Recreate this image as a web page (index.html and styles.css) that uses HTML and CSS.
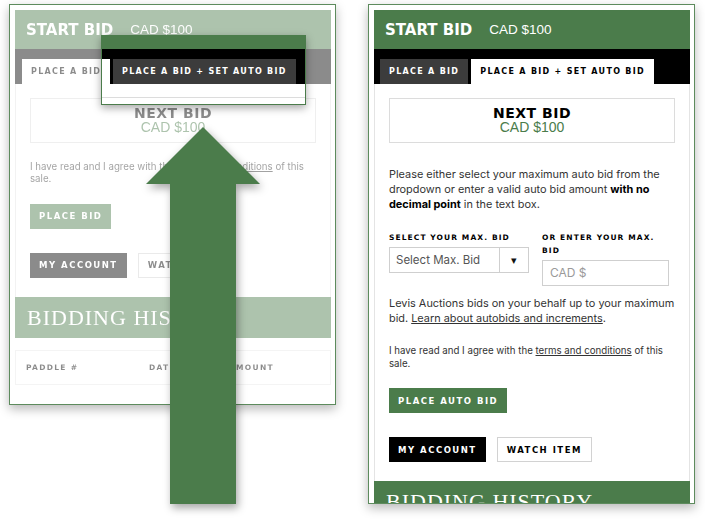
FILE: index.html
```html
<!DOCTYPE html>
<html lang="en">
<head>
    <meta charset="UTF-8">
    <meta name="viewport" content="width=device-width, initial-scale=1.0">
    <title>Start Bid - Auto Bid</title>
    <link rel="stylesheet" href="styles.css">
</head>
<body>
    <div class="stage">
        <!-- before: old bid box, faded -->
        <div class="panel panel-old">
            <div class="card faded">
                <div class="bid-head">
                    <span class="bid-title">START BID</span>
                    <span class="bid-price">CAD $100</span>
                </div>
                <div class="tabs tabs-old">
                    <div class="tab tab-on">PLACE A BID</div>
                    <div class="tab">PLACE A BID + SET AUTO BID</div>
                </div>
                <div class="card-body">
                    <div class="next-bid">
                        <div class="next-label">NEXT BID</div>
                        <div class="next-price">CAD $100</div>
                    </div>
                    <p class="terms terms-old">I have read and I agree with the <u>terms and conditions</u> of this sale.</p>
                    <button class="btn btn-green">PLACE BID</button>
                    <div class="btn-row">
                        <button class="btn btn-dark">MY ACCOUNT</button>
                        <button class="btn btn-line">WATCH ITEM</button>
                    </div>
                </div>
                <div class="history">BIDDING HISTORY</div>
                <div class="history-table">
                    <span class="col-paddle">PADDLE #</span>
                    <span class="col-date">DATE</span>
                    <span>AMOUNT</span>
                </div>
            </div>
        </div>

        <!-- after: auto bid tab open -->
        <div class="panel panel-new">
            <div class="card">
                <div class="bid-head">
                    <span class="bid-title">START BID</span>
                    <span class="bid-price">CAD $100</span>
                </div>
                <div class="tabs">
                    <div class="tab">PLACE A BID</div>
                    <div class="tab tab-on">PLACE A BID + SET AUTO BID</div>
                </div>
                <div class="card-body">
                    <div class="next-bid">
                        <div class="next-label">NEXT BID</div>
                        <div class="next-price">CAD $100</div>
                    </div>
                    <p class="note">Please either select your maximum auto bid from the dropdown or enter a valid auto bid amount <b>with no decimal point</b> in the text box.</p>
                    <div class="fields">
                        <div class="field field-select">
                            <div class="label">SELECT YOUR MAX. BID</div>
                            <div class="select">
                                <span class="select-text">Select Max. Bid</span>
                                <span class="select-caret">&#9662;</span>
                            </div>
                        </div>
                        <div class="field field-input">
                            <div class="label">OR ENTER YOUR MAX. BID</div>
                            <div class="input">CAD $</div>
                        </div>
                    </div>
                    <p class="note note-auto">Levis Auctions bids on your behalf up to your maximum bid. <u>Learn about autobids and increments</u>.</p>
                    <p class="terms terms-new">I have read and I agree with the <u>terms and conditions</u> of this sale.</p>
                    <button class="btn btn-green">PLACE AUTO BID</button>
                    <div class="btn-row">
                        <button class="btn btn-dark">MY ACCOUNT</button>
                        <button class="btn btn-line">WATCH ITEM</button>
                    </div>
                </div>
                <div class="history">BIDDING HISTORY</div>
            </div>
        </div>

        <!-- callout over the old tab -->
        <div class="zoom">
            <div class="zoom-head"></div>
            <div class="zoom-tabs">
                <div class="zoom-piece"></div>
                <div class="tab">PLACE A BID + SET AUTO BID</div>
            </div>
            <div class="zoom-body"></div>
        </div>

        <svg class="arrow" width="130" height="395" viewBox="0 0 130 395">
            <polygon points="63,7 6,64 30,64 30,384 96,384 96,64 120,64" fill="#4b7c4b"/>
        </svg>
    </div>
</body>
</html>
```

FILE: styles.css
```css
* {
    box-sizing: border-box;
}
body {
    margin: 0;
    background: #fff;
    font-family: Inter, "Liberation Sans", sans-serif;
    color: #333;
}
.stage {
    position: relative;
    display: flex;
    align-items: flex-start;
    gap: 32px;
    padding: 4px 0 0 9px;
    height: 519px;
    overflow: hidden;
}
.panel {
    width: 327px;
    border: 1px solid #5d8b5d;
    background: #fff;
    padding: 5px 4px 0 5px;
    box-shadow: 0 4px 10px rgba(0, 0, 0, 0.28);
    overflow: hidden;
}
.panel-old {
    height: 401px;
}
.panel-new {
    height: 500px;
}
.faded {
    opacity: 0.45;
}
.bid-head {
    height: 39px;
    background: #4b7c4b;
    color: #fff;
    display: flex;
    align-items: center;
    padding-left: 11px;
}
.bid-title {
    font: bold 15px "DejaVu Sans", sans-serif;
    margin-right: 17px;
}
.bid-price {
    font: 13.5px "Liberation Sans", sans-serif;
}
.tabs {
    height: 35px;
    background: #000;
    display: flex;
    gap: 3px;
    padding: 10px 0 0 6px;
}
.tabs-old {
    padding-left: 7px;
}
.tab {
    height: 25px;
    padding: 0 9px;
    display: flex;
    align-items: center;
    background: #3c3c3c;
    color: #fff;
    font: bold 8px "DejaVu Sans", sans-serif;
    letter-spacing: 1.3px;
    white-space: nowrap;
}
.tab-on {
    background: #fff;
    color: #000;
}
.card-body {
    padding: 14px 14px 19px;
    border-left: 1px solid #e4e4e4;
    border-right: 1px solid #e4e4e4;
}
.next-bid {
    height: 45px;
    border: 1px solid #dcdcdc;
    text-align: center;
    padding-top: 7px;
}
.next-label {
    font: bold 14px "DejaVu Sans", sans-serif;
    letter-spacing: 0.5px;
    line-height: 14px;
    color: #000;
}
.next-price {
    font: 14px "Liberation Sans", sans-serif;
    line-height: 15px;
    color: #4b7c4b;
}
.note {
    margin: 24px -6px 0 0;
    font-size: 10.9px;
    line-height: 15px;
}
.note b {
    color: #000;
}
.note-auto {
    margin-top: 10px;
}
.fields {
    display: flex;
    gap: 13px;
    margin-top: 19px;
}
.field-select {
    width: 140px;
}
.field-input {
    width: 127px;
}
.label {
    font: bold 7.5px "DejaVu Sans", sans-serif;
    letter-spacing: 1.1px;
    line-height: 13px;
    color: #000;
    margin-bottom: 2.5px;
}
.select {
    height: 26px;
    border: 1px solid #cfcfcf;
    display: flex;
}
.select-text {
    flex: 1;
    display: flex;
    align-items: center;
    padding-left: 6px;
    font-size: 11.5px;
    color: #555;
}
.select-caret {
    width: 29px;
    border-left: 1px solid #cfcfcf;
    display: flex;
    align-items: center;
    justify-content: center;
    font-size: 11px;
    color: #111;
}
.input {
    height: 26px;
    border: 1px solid #cfcfcf;
    display: flex;
    align-items: center;
    padding-left: 7px;
    font-size: 12px;
    color: #9a9a9a;
}
.terms {
    margin: 0 -6px 0 0;
    font-size: 9.7px;
    line-height: 12.5px;
}
.terms-old {
    margin-top: 17.5px;
}
.terms-new {
    margin-top: 19.5px;
}
.btn {
    height: 25px;
    padding: 0 9px;
    border: none;
    margin: 18px 0 0;
    display: inline-flex;
    align-items: center;
    font: bold 8.5px "DejaVu Sans", sans-serif;
    letter-spacing: 1.5px;
    cursor: pointer;
}
.btn-green {
    background: #4b7c4b;
    color: #fff;
}
.btn-row {
    display: flex;
    gap: 11px;
    margin-top: 24px;
}
.btn-row .btn {
    margin: 0;
}
.btn-dark {
    background: #000;
    color: #fff;
}
.btn-line {
    background: #fff;
    color: #000;
    border: 1px solid #d2d2d2;
}
.history {
    height: 41px;
    background: #4b7c4b;
    color: #fff;
    font: 22px "Liberation Serif", serif;
    letter-spacing: 1px;
    line-height: 25px;
    padding: 8px 0 0 12px;
}
.history-table {
    margin-top: 12px;
    height: 35px;
    border: 1px solid #e8e8e8;
    display: flex;
    align-items: center;
    padding-left: 10px;
    font: bold 7.5px "DejaVu Sans", sans-serif;
    letter-spacing: 1.3px;
    color: #000;
}
.col-paddle {
    width: 123px;
}
.col-date {
    width: 80px;
}
.zoom {
    position: absolute;
    left: 101px;
    top: 35px;
    width: 205px;
    height: 70px;
    border: 1px solid #4b7c4b;
    background: #fff;
    box-shadow: 0 3px 8px rgba(0, 0, 0, 0.35);
    overflow: hidden;
}
.zoom-head {
    height: 13px;
    background: #4b7c4b;
}
.zoom-tabs {
    height: 35px;
    background: #000;
    display: flex;
    gap: 3px;
    padding-top: 10px;
}
.zoom-piece {
    width: 8px;
    height: 25px;
    background: #fff;
}
.zoom-body {
    height: 14px;
    border-bottom: 1px solid #dcdcdc;
}
.arrow {
    position: absolute;
    left: 140px;
    top: 120px;
    filter: drop-shadow(2px 4px 4px rgba(0, 0, 0, 0.35));
}
```
